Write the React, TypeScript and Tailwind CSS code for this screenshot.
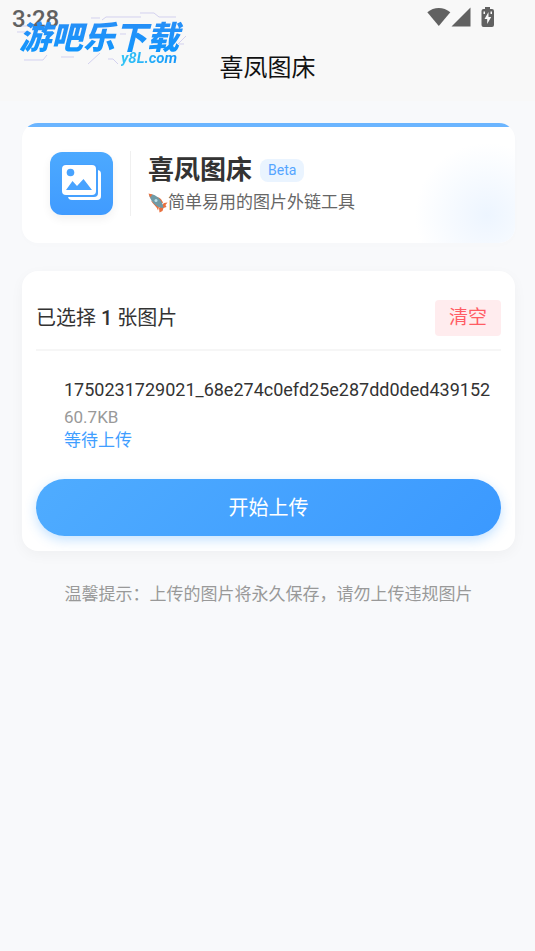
import type { ReactNode } from "react";

const files = [
  {
    name: "1750231729021_68e274c0efd25e287dd0ded439152",
    size: "60.7KB",
    status: "等待上传",
  },
];

function StatusBar() {
  return (
    <div className="flex h-9 items-start justify-between pl-3 pr-9 pt-1 text-[#616161]">
      <span className="text-2xl leading-[30px] font-medium">3:28</span>
      <div className="flex items-center pt-[3px]">
        <svg className="h-5 w-6" viewBox="0 0 24 20" fill="currentColor" aria-label="Wi-Fi">
          <path d="M0.3 5.3C7-0.4 16.500-0.400 23.300 5.300L11.800 19Z" />
        </svg>
        <svg className="h-5 w-5" viewBox="0 0 20 20" fill="currentColor" aria-label="Signal">
          <path d="M0.500 19.500L19.500 0.500V19.500Z" />
        </svg>
        <svg className="ml-2 h-5 w-5" viewBox="0 0 20 20" fill="currentColor" aria-label="Battery">
          <path
            fillRule="evenodd"
            d="M6 0H11V2H13Q15 2 15 4V18Q15 20 13 20H4.500Q2.500 20 2.500 18V4Q2.500 2 4.500 2H6ZM9.500 5L5.500 12H8.200V17L12.200 10H9.500Z"
          />
          <path fill="#f8f8f8" d="M4.500 4.500H6V7H4.500ZM11.500 4.500H13V7H11.500Z" />
        </svg>
      </div>
    </div>
  );
}

function SiteLogo() {
  return (
    <div className="absolute left-4 top-3 h-[58px] w-[172px] italic">
      <svg
        className="absolute inset-0 h-full w-full"
        viewBox="0 0 172 58"
        fill="none"
        stroke="#d3d1ef"
        strokeWidth="1"
      >
        <path d="M75 6H84M86 8L90 5H125M124 1H138L143 5H160M1 20H12M6 14H14M8 48H27L31 43M45 45H58M72 52L84 41M92 47H97L102 52M104 22H110M158 36L170 24M163 32H168" />
      </svg>
      <span className="absolute left-[3px] top-0.5 whitespace-nowrap bg-gradient-to-b from-[#2a8df5] to-[#0098ff] bg-clip-text pr-2 text-[32px] leading-[48px] font-black text-transparent">
        游吧乐下载
      </span>
      <span className="absolute left-[105px] top-[38px] bg-gradient-to-r from-[#35c5f5] to-[#1593fa] bg-clip-text pr-1 text-[15px] leading-4 font-bold text-transparent">
        y8L.com
      </span>
    </div>
  );
}

function PicturesIcon() {
  return (
    <svg className="h-10 w-10" viewBox="0 0 40 40" aria-hidden="true">
      <rect x="6" y="6" width="33" height="30" rx="4" fill="#fff" />
      <rect x="-1" y="0" width="37" height="33" rx="4" fill="#46a1ff" />
      <rect x="0" y="1" width="34" height="30" rx="4" fill="#fff" />
      <circle cx="8.500" cy="8.500" r="3.800" fill="#48a3ff" />
      <path fill="#48a3ff" d="M4 26L10.500 17L15 22L21.500 15L30 26Z" />
    </svg>
  );
}

function Rocket() {
  return (
    <svg className="h-5 w-5 shrink-0" viewBox="0 0 20 20" aria-hidden="true">
      <path fill="#e9713f" d="M13 13L16 10L19.500 9.500L17.500 12L18.500 14L15.500 15L14.500 18L11.500 19.500L11 15Z" />
      <path fill="#e9713f" d="M3 8L6 9L11 14L10 17.500C9 14 6 12 3 8ZM8 4C11 4 14 6 15 10L13 10Z" />
      <path fill="#6f9aa6" d="M1 1C6 1 12 4 14.500 11L15.500 15L11.500 14.500C6 12 2 7 1 1Z" />
      <path fill="#e9713f" d="M0.500 0.500L4.500 1.500L2 4.500Z" />
      <circle cx="8" cy="7.500" r="1.500" fill="#b9e1eb" />
    </svg>
  );
}

function Card({ className, children }: { className: string; children: ReactNode }) {
  return (
    <section className={`rounded-2xl bg-white ${className}`}>
      {children}
    </section>
  );
}

export default function App() {
  return (
    <div className="min-h-screen bg-[#f8f9fb] font-[Roboto,'Noto_Sans_CJK_SC',sans-serif] text-[#333]">
      <header className="relative h-[101px] bg-[#f8f8f8]">
        <StatusBar />
        <h1 className="pt-3.5 text-center text-2xl leading-9 text-[#111]">喜凤图床</h1>
        <SiteLogo />
      </header>

      <main className="pl-[22px] pr-5 pt-[22px]">
        <Card className="relative overflow-hidden shadow-[0_2px_8px_rgba(0,0,0,0.01)]">
          <div className="h-1 bg-[#6bb5ff]" />
          <div className="pointer-events-none absolute -bottom-11 -right-11 h-36 w-36 rounded-full bg-[radial-gradient(closest-side,#edf5ff,#ffffff)]" />
          <div className="relative flex items-center px-7 pb-[27px] pt-6">
            <div className="flex h-[63px] w-[63px] items-center justify-center rounded-xl bg-gradient-to-b from-[#4ca9ff] to-[#409bff] shadow-[0_4px_10px_rgba(0,0,0,0.06)]">
              <PicturesIcon />
            </div>
            <div className="ml-[17px] border-l border-[#f0f0f0] pl-[17px]">
              <div className="flex items-center gap-2 pt-[3px]">
                <h2 className="text-[26px] leading-8 font-bold">喜凤图床</h2>
                <span className="rounded-lg bg-[#eaf4ff] px-2 text-sm leading-[23px] text-[#55a5ff]">
                  Beta
                </span>
              </div>
              <p className="flex items-center pt-[3px] text-[17px] leading-[27px] text-[#666]">
                <Rocket />
                简单易用的图片外链工具
              </p>
            </div>
          </div>
        </Card>

        <Card className="mt-7 px-3.5 pb-[15px] pt-[29px] shadow-[0_4px_14px_rgba(0,0,0,0.04)]">
          <div className="flex items-center justify-between border-b-2 border-[#f6f6f6] pb-[13px]">
            <h3 className="text-xl leading-7">
              已选择 <b className="font-medium">1</b> 张图片
            </h3>
            <button type="button" className="rounded bg-[#ffecee] px-3.5 text-[19px] leading-9 text-[#ff5c64]">
              清空
            </button>
          </div>

          <ul className="pb-7 pl-7 pt-6">
            {files.map((file) => (
              <li key={file.name}>
                <p className="overflow-hidden whitespace-nowrap text-lg leading-[30px]">{file.name}</p>
                <p className="text-[17px] leading-6 text-[#999]">{file.size}</p>
                <p className="text-[17px] leading-[22px] text-[#409eff]">{file.status}</p>
              </li>
            ))}
          </ul>

          <button
            type="button"
            className="block h-[57px] w-full rounded-full bg-[linear-gradient(135deg,#4facff,#3b99ff)] text-xl text-white shadow-[0_4px_12px_rgba(64,158,255,0.3)]"
          >
            开始上传
          </button>
        </Card>

        <p className="pt-7 text-center text-[17px] leading-[30px] text-[#999]">
          温馨提示：上传的图片将永久保存，请勿上传违规图片
        </p>
      </main>
    </div>
  );
}
